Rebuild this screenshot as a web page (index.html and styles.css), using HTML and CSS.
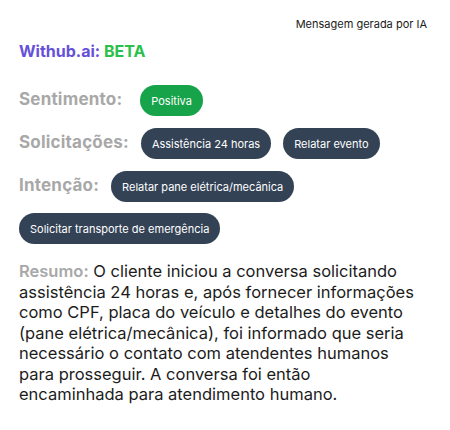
FILE: index.html
```html
<!DOCTYPE html>
<html>
<head>
    <title>Withub.ai</title>
    <link rel="stylesheet" href="styles.css">
</head>
<body>
    <div class="card">
        <div class="ai-note">Mensagem gerada por IA</div>

        <h1 class="brand">Withub.ai: <span class="beta">BETA</span></h1>

        <!-- tag rows -->
        <div class="tag-row">
            <span class="label">Sentimento:</span>
            <span class="pill pill-green">Positiva</span>
        </div>

        <div class="tag-row">
            <span class="label">Solicitações:</span>
            <span class="pill">Assistência 24 horas</span>
            <span class="pill">Relatar evento</span>
        </div>

        <div class="tag-row">
            <span class="label">Intenção:</span>
            <span class="pill">Relatar pane elétrica/mecânica</span>
            <span class="pill">Solicitar transporte de emergência</span>
        </div>

        <p class="summary"><b class="summary-label">Resumo:</b> O cliente iniciou a conversa solicitando assistência 24 horas e, após fornecer informações como CPF, placa do veículo e detalhes do evento (pane elétrica/mecânica), foi informado que seria necessário o contato com atendentes humanos para prosseguir. A conversa foi então encaminhada para atendimento humano.</p>
    </div>
</body>
</html>
```

FILE: styles.css
```css
/* page */
body {
    margin: 0;
    padding: 0;
    background-color: #ffffff;
    font-family: 'Inter', 'Roboto', sans-serif;
    color: #1c1c1c;
}

.card {
    width: 450px;
    padding: 17px 24px 0 19px;
    box-sizing: border-box;
}

.ai-note {
    text-align: right;
    font-size: 11px;
    line-height: 14px;
    color: #1a1a1a;
    margin-right: -1px;
}

.brand {
    margin: 10px 0 24px;
    font-size: 16px;
    line-height: 20px;
    font-weight: 700;
    color: #6550d9;
}

.beta {
    color: #2bbf4c;
}

/* labels + pills */
.tag-row {
    display: flex;
    flex-wrap: wrap;
    align-items: center;
    column-gap: 12px;
    row-gap: 11px;
    margin-bottom: 12px;
}

.label {
    font-size: 17px;
    letter-spacing: 0.2px;
    font-weight: 700;
    color: #a8a8a8;
    margin-top: -3px;
}

.pill {
    display: inline-flex;
    align-items: center;
    height: 31px;
    padding: 0 11px;
    border-radius: 16px;
    background-color: #334255;
    color: #ffffff;
    font-size: 11px;
}

.pill-green {
    background-color: #17a34a;
    margin-left: 6px;
}

/* summary */
.summary {
    margin: 17px 8px 0 0;
    font-size: 16.5px;
    line-height: 20.5px;
    color: #1c1c1c;
}

.summary-label {
    font-weight: 600;
    color: #a8a8a8;
}
```
